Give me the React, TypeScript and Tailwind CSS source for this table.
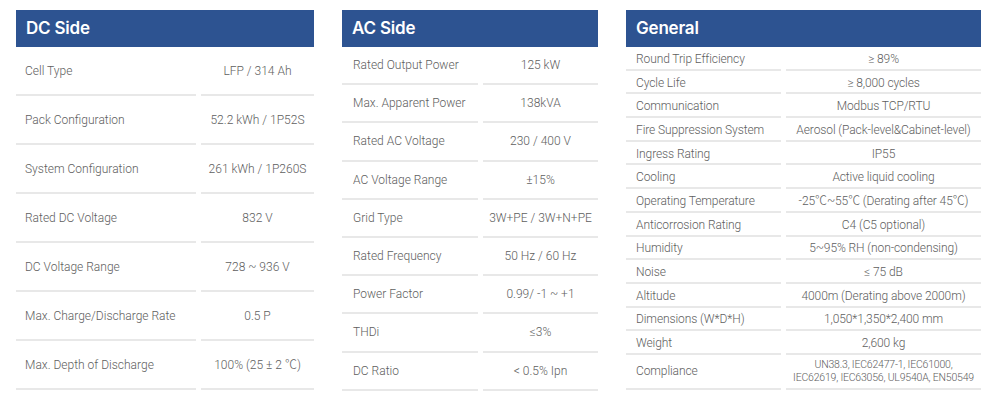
import React from "react";

type Row = { label: string; value: React.ReactNode; tall?: boolean };

const dc: Row[] = [
  { label: "Cell Type", value: "LFP / 314 Ah" },
  { label: "Pack Configuration", value: "52.2 kWh / 1P52S" },
  { label: "System Configuration", value: "261 kWh / 1P260S" },
  { label: "Rated DC Voltage", value: "832 V" },
  { label: "DC Voltage Range", value: "728 ~ 936 V" },
  { label: "Max. Charge/Discharge Rate", value: "0.5 P" },
  { label: "Max. Depth of Discharge", value: "100% (25 ± 2 ℃)" },
];

const ac: Row[] = [
  { label: "Rated Output Power", value: "125 kW" },
  { label: "Max. Apparent Power", value: "138kVA" },
  { label: "Rated AC Voltage", value: "230 / 400 V" },
  { label: "AC Voltage Range", value: "±15%" },
  { label: "Grid Type", value: "3W+PE / 3W+N+PE" },
  { label: "Rated Frequency", value: "50 Hz / 60 Hz" },
  { label: "Power Factor", value: "0.99/ -1 ~ +1" },
  { label: "THDi", value: "≤3%" },
  { label: "DC Ratio", value: "< 0.5% Ipn" },
];

const gen: Row[] = [
  { label: "Round Trip Efficiency", value: "≥ 89%" },
  { label: "Cycle Life", value: "≥ 8,000 cycles" },
  { label: "Communication", value: "Modbus TCP/RTU" },
  { label: "Fire Suppression System", value: "Aerosol (Pack-level&Cabinet-level)" },
  { label: "Ingress Rating", value: "IP55" },
  { label: "Cooling", value: "Active liquid cooling" },
  { label: "Operating Temperature", value: "-25℃~55℃ (Derating after 45℃)" },
  { label: "Anticorrosion Rating", value: "C4 (C5 optional)" },
  { label: "Humidity", value: "5~95% RH (non-condensing)" },
  { label: "Noise", value: "≤ 75 dB" },
  { label: "Altitude", value: "4000m (Derating above 2000m)" },
  { label: "Dimensions (W*D*H)", value: "1,050*1,350*2,400 mm" },
  { label: "Weight", value: "2,600 kg" },
  {
    label: "Compliance",
    tall: true,
    value: (
      <span className="block text-[10.5px] leading-[13px] tracking-[-0.2px]">
        UN38.3, IEC62477-1, IEC61000,
        <br />
        IEC62619, IEC63056, UL9540A, EN50549
      </span>
    ),
  },
];

type PanelProps = {
  title: string;
  rows: Row[];
  panelCls: string;
  labelCls: string;
  rowCls: string;
  tallCls?: string;
  textCls: string;
};

function Panel({ title, rows, panelCls, labelCls, rowCls, tallCls, textCls }: PanelProps) {
  return (
    <div className={"shrink-0 " + panelCls}>
      <div className="h-[37px] bg-[#2d5391] flex items-center pl-[10px] text-white text-[17px] font-semibold tracking-[-0.2px] font-['Inter',sans-serif]">
        {title}
      </div>
      <div className={"flex flex-col " + textCls}>
        {rows.map((r, i) => (
          <div key={i} className={"flex gap-[5px] " + (r.tall ? tallCls : rowCls)}>
            <div className={"border-b-2 border-[#e8e8e8] flex items-center whitespace-nowrap " + labelCls}>
              {r.label}
            </div>
            <div className="flex-1 border-b-2 border-[#e8e8e8] flex items-center justify-center text-center whitespace-nowrap">
              {r.value}
            </div>
          </div>
        ))}
      </div>
    </div>
  );
}

export default function App() {
  return (
    <div className="w-[992px] h-[417px] bg-white flex pl-[16px] pt-[10px] gap-[28px] font-['Roboto','Noto_Sans_CJK_SC',sans-serif] font-light text-[#5e5e5e]">
      <Panel
        title="DC Side"
        rows={dc}
        panelCls="w-[298px]"
        labelCls="w-[180px] pl-[9px]"
        rowCls="h-[49px]"
        textCls="text-[12px]"
      />
      <Panel
        title="AC Side"
        rows={ac}
        panelCls="w-[256px]"
        labelCls="w-[136px] pl-[11px]"
        rowCls="h-[38.2px]"
        textCls="text-[12px]"
      />
      <Panel
        title="General"
        rows={gen}
        panelCls="w-[355px]"
        labelCls="w-[155px] pl-[10px]"
        rowCls="h-[23.7px] pt-[2px]"
        tallCls="h-[35px]"
        textCls="text-[12px] tracking-[-0.1px]"
      />
    </div>
  );
}
